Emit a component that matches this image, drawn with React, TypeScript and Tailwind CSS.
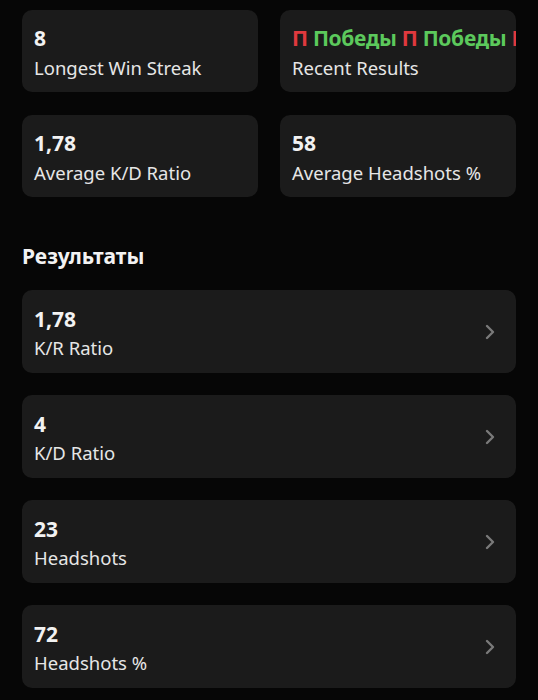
import React from "react";

const font = { fontFamily: '"Noto Sans", "Open Sans", sans-serif' };

function Chevron() {
  return (
    <svg width="12" height="18" viewBox="0 0 12 18" fill="none" className="shrink-0">
      <path d="M3 3l6 6-6 6" stroke="#7a7a7a" strokeWidth="2.4" strokeLinecap="round" strokeLinejoin="round" />
    </svg>
  );
}

function StatCard({ value, label }: { value: React.ReactNode; label: string }) {
  return (
    <div className="bg-[#1b1b1b] rounded-[10px] h-[82px] pl-3 pr-[2px] pt-[6px] flex flex-col justify-center overflow-hidden">
      <div className="text-[21px] leading-[28px] font-bold text-[#f2f2f2] whitespace-nowrap">{value}</div>
      <div className="text-[18.5px] leading-[32px] text-[#e6e6e6] whitespace-nowrap">{label}</div>
    </div>
  );
}

function RowCard({ value, label }: { value: string; label: string }) {
  return (
    <div className="bg-[#1b1b1b] rounded-[10px] h-[83px] pl-3 pr-5 flex items-center justify-between">
      <div className="flex flex-col pt-[4px]">
        <div className="text-[21px] leading-[28px] font-bold text-[#f2f2f2]">{value}</div>
        <div className="text-[18.5px] leading-[30px] text-[#e6e6e6]">{label}</div>
      </div>
      <Chevron />
    </div>
  );
}

export default function App() {
  const recent = (
    <span className="tracking-[-0.3px]">
      <span className="text-[#e0393e]">П</span> <span className="text-[#5cc95c]">Победы</span>{" "}
      <span className="text-[#e0393e]">П</span> <span className="text-[#5cc95c]">Победы</span>{" "}
      <span className="text-[#e0393e]">П</span> <span className="text-[#5cc95c]">Победы</span>
    </span>
  );
  return (
    <div className="min-h-[700px] bg-[#060606] px-[22px] pt-[10px] pb-4" style={font}>
      <div className="grid grid-cols-2 gap-x-[22px] gap-y-[23px]">
        <StatCard value="8" label="Longest Win Streak" />
        <StatCard value={recent} label="Recent Results" />
        <StatCard value="1,78" label="Average K/D Ratio" />
        <StatCard value="58" label="Average Headshots %" />
      </div>
      <div className="mt-[45px] mb-[20px] text-[21px] leading-[28px] font-bold text-[#f2f2f2]">Результаты</div>
      <div className="flex flex-col gap-[22px]">
        <RowCard value="1,78" label="K/R Ratio" />
        <RowCard value="4" label="K/D Ratio" />
        <RowCard value="23" label="Headshots" />
        <RowCard value="72" label="Headshots %" />
      </div>
    </div>
  );
}
